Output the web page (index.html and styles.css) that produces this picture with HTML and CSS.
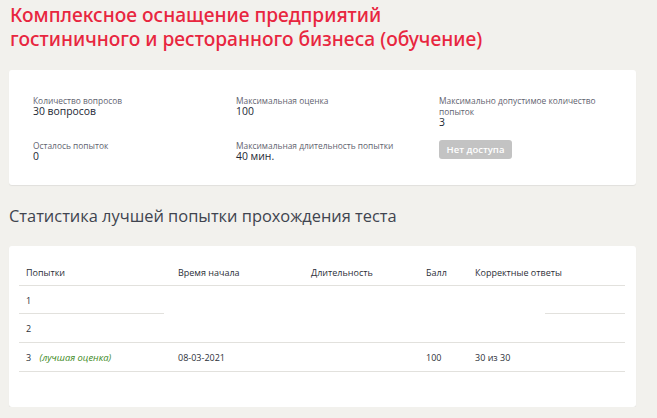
FILE: index.html
```html
<!DOCTYPE html>
<html lang="ru">
<head>
<meta charset="utf-8">
<link rel="stylesheet" href="styles.css">
</head>
<body>
<div class="page">
  <h1 class="title">Комплексное оснащение предприятий гостиничного и ресторанного бизнеса (обучение)</h1>

  <section class="card info">
    <div class="info-grid">
      <div class="item">
        <div class="label">Количество вопросов</div>
        <div class="value">30 вопросов</div>
      </div>
      <div class="item">
        <div class="label">Максимальная оценка</div>
        <div class="value">100</div>
      </div>
      <div class="item">
        <div class="label">Максимально допустимое количество попыток</div>
        <div class="value">3</div>
      </div>
      <div class="item">
        <div class="label">Осталось попыток</div>
        <div class="value">0</div>
      </div>
      <div class="item">
        <div class="label">Максимальная длительность попытки</div>
        <div class="value">40 мин.</div>
      </div>
      <div class="item">
        <button class="btn-disabled" type="button">Нет доступа</button>
      </div>
    </div>
  </section>

  <h2 class="subtitle">Статистика лучшей попытки прохождения теста</h2>

  <section class="card stats">
    <div class="table">
      <div class="row head">
        <div class="cell">Попытки</div>
        <div class="cell">Время начала</div>
        <div class="cell">Длительность</div>
        <div class="cell">Балл</div>
        <div class="cell">Корректные ответы</div>
      </div>
      <div class="row partial">
        <div class="cell">1</div>
        <div class="cell"></div>
        <div class="cell"></div>
        <div class="cell"></div>
        <div class="cell"></div>
      </div>
      <div class="row">
        <div class="cell">2</div>
        <div class="cell"></div>
        <div class="cell"></div>
        <div class="cell"></div>
        <div class="cell"></div>
      </div>
      <div class="row">
        <div class="cell">3 <span class="best">(лучшая оценка)</span></div>
        <div class="cell">08-03-2021</div>
        <div class="cell"></div>
        <div class="cell">100</div>
        <div class="cell">30 из 30</div>
      </div>
    </div>
  </section>
</div>
</body>
</html>
```

FILE: styles.css
```css
html, body {
  margin: 0;
  padding: 0;
  background: #f2f1ed;
}
body {
  font-family: "Open Sans", "Noto Sans", sans-serif;
  color: #2f3340;
}
.page {
  width: 627px;
  padding: 0 0 0 9px;
}
.title {
  margin: 0;
  padding: 3px 0 0 1px;
  font-family: "Noto Sans", sans-serif;
  font-weight: 500;
  font-size: 19.2px;
  line-height: 24px;
  color: #e8263f;
  width: 500px;
}
.card {
  background: #fff;
  border-radius: 3px;
  box-shadow: 0 1px 1px rgba(0,0,0,0.07);
}
.info {
  margin-top: 19px;
  height: 115px;
  box-sizing: border-box;
  padding: 25px 18px 0 24px;
}
.info-grid {
  display: grid;
  grid-template-columns: 203px 203px 180px;
  grid-template-rows: 45px 40px;
}
.item {
  display: flex;
  flex-direction: column;
  justify-content: flex-start;
}
.label {
  font-size: 8.4px;
  line-height: 11px;
  color: #5f6370;
}
.value {
  font-size: 10.4px;
  line-height: 11px;
  font-weight: 400;
  color: #232734;
}
.btn-disabled {
  align-self: flex-start;
  width: 73px;
  height: 19px;
  border: 0;
  border-radius: 3px;
  background: #c3c3c3;
  color: #fff;
  font-family: "Open Sans", sans-serif;
  font-size: 9.5px;
  font-weight: 600;
  padding: 0;
}
.subtitle {
  margin: 20px 0 0 0;
  font-weight: 400;
  font-size: 16.4px;
  line-height: 22px;
  color: #40444f;
}
.stats {
  margin-top: 19px;
  height: 161px;
  box-sizing: border-box;
  padding: 14px 11px 0 10px;
}
.row {
  display: grid;
  grid-template-columns: 152px 133px 115px 49px 157px;
  height: 28px;
  border-bottom: 1px solid #e2e1dd;
  align-items: center;
  font-size: 9px;
  color: #2c2f38;
}
.row.head {
  height: 25px;
}
.row.partial {
  border-bottom: 0;
  background:
    linear-gradient(#e2e1dd, #e2e1dd) left bottom / 145px 1px no-repeat,
    linear-gradient(#e2e1dd, #e2e1dd) right bottom / 80px 1px no-repeat;
}
.cell {
  padding-left: 7px;
  white-space: nowrap;
}
.best {
  margin-left: 6px;
  font-style: italic;
  font-size: 9.4px;
  color: #3e8a1e;
}
```
